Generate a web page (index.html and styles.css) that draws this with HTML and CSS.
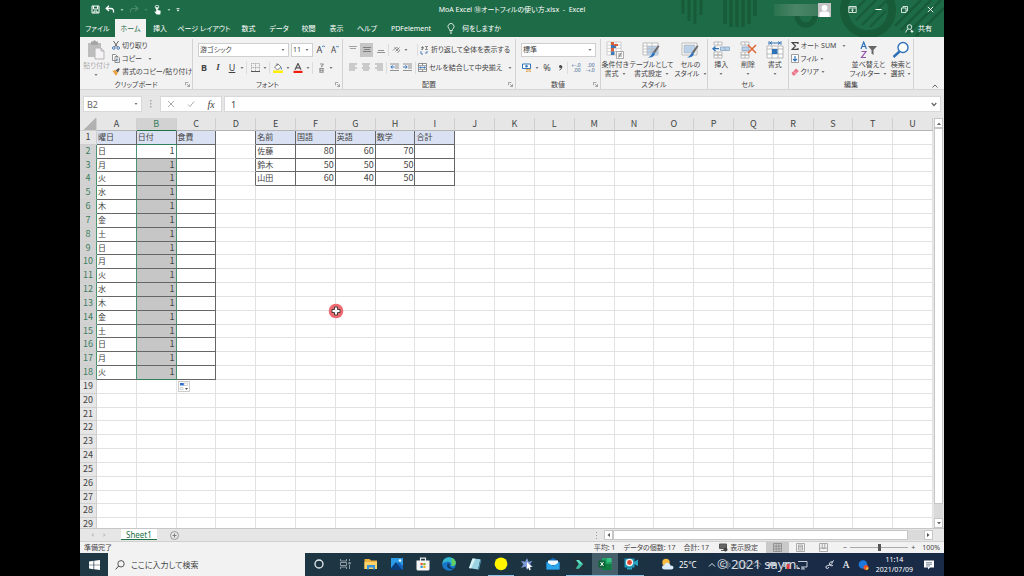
FILE: index.html
```html
<!DOCTYPE html>
<html lang="ja">
<head>
<meta charset="utf-8">
<title>MoA Excel - Excel</title>
<link rel="stylesheet" href="styles.css">
</head>
<body>
<svg class="defs" aria-hidden="true">
  <symbol id="caret" viewBox="0 0 4 4"><path d="M.5 1h3L2 3z" fill="#777"/></symbol>
  <symbol id="launch" viewBox="0 0 6 6"><path d="M.5 4V.5H4M2.500 2.500L5 5M5.500 2.500v3h-3" fill="none" stroke="#777" stroke-width=".8"/></symbol>
</svg>
<div class="app">
  <header class="titlebar">
    <svg class="pattern" viewBox="0 0 264 37" aria-hidden="true">
      <g stroke="#185b39" fill="none">
        <path d="M3 0v14M9 0v21M15 0v24M21 0v15" stroke-width="3"/>
        <path d="M45 0v24M51 0v27M57 0v27M63 0v27M69 0v24M75 0v16" stroke-width="3.500"/>
        <circle cx="126" cy="16" r="9" stroke-width="5"/>
        <circle cx="188" cy="10" r="24" stroke-width="8"/>
        <path d="M171 14l14-14M176 20l20-20M182 25l24-24M190 27l16-16" stroke-width="2"/>
        <path d="M215 26l26-26M221 30l30-30M227 34l34-34M236 36l28-28" stroke-width="2.500"/>
      </g>
    </svg>
    <div class="quick">
      <button aria-label="上書き保存"><svg width="9" height="9" viewBox="0 0 9 9"><path d="M1 1h7v7H1zM2.500 1v3h4V1M3 8V6h3v2" fill="none" stroke="#fff"/></svg></button>
      <button aria-label="元に戻す"><svg width="10" height="9" viewBox="0 0 10 9"><path d="M4 .8L1.200 3.500 4 6M1.500 3.500h4.500q3 0 2.500 4" fill="none" stroke="#fff" stroke-width="1.300"/></svg></button>
      <svg class="qcaret" viewBox="0 0 4 4"><path d="M.5 1h3L2 3z" fill="#a9cbb8"/></svg>
      <button aria-label="やり直し"><svg width="10" height="9" viewBox="0 0 10 9"><path d="M6 .8L8.800 3.500 6 6M8.500 3.500H4q-3 0-2.500 4" fill="none" stroke="#4b8a67" stroke-width="1.200"/></svg></button>
      <svg class="qcaret" viewBox="0 0 4 4"><path d="M.5 1h3L2 3z" fill="#4b8a67"/></svg>
      <button aria-label="タッチ/マウス"><svg width="9" height="10" viewBox="0 0 9 10"><circle cx="4" cy="2" r="1.800" fill="none" stroke="#fff" stroke-width=".8"/><path d="M3.200 2h1.500v3l3 .8-.4 3.700H3.500L1.300 6.500l1.900.3z" fill="#fff"/></svg></button>
      <svg class="qcaret" viewBox="0 0 4 4"><path d="M.5 1h3L2 3z" fill="#a9cbb8"/></svg>
      <svg class="qcaret last" viewBox="0 0 4 4"><path d="M.5 0h3v.8h-3zM.5 1.800h3L2 3.500z" fill="#fff"/></svg>
    </div>
    <h1 class="doc">MoA Excel ⑱オートフィルの使い方.xlsx &nbsp;-&nbsp; Excel</h1>
    <div class="account">
      <span class="username"></span>
      <svg width="13" height="14" viewBox="0 0 13 14"><path d="M0 0h13v14H0z" fill="#c5c3c5"/><circle cx="6.500" cy="5" r="2.900" fill="#fff"/><path d="M1.500 14V11q0-2.500 3-2.500h4q3 0 3 2.500v3z" fill="#fff"/></svg>
      <div class="winbtns">
        <button aria-label="リボンの表示オプション"><svg width="9" height="9" viewBox="0 0 9 9"><path d="M.8 1.500h7.400v6H.8zM.8 3h7.400M4.500 7V4.200M3.200 5.400l1.300-1.200 1.300 1.200" fill="none" stroke="#e6f0ea" stroke-width=".9"/></svg></button>
        <button aria-label="最小化"><svg width="9" height="9" viewBox="0 0 9 9"><path d="M1.500 4.500h6" stroke="#fff"/></svg></button>
        <button aria-label="元に戻す(縮小)"><svg width="9" height="9" viewBox="0 0 9 9"><path d="M1.500 3h4.500v4.500H1.500zM3 3V1.500h4.500V6H6" fill="none" stroke="#fff" stroke-width=".8"/></svg></button>
        <button aria-label="閉じる"><svg width="9" height="9" viewBox="0 0 9 9"><path d="M1.800 1.800l5.400 5.400M7.200 1.800L1.800 7.200" stroke="#fff" stroke-width=".9"/></svg></button>
      </div>
    </div>
  </header>

  <nav class="tabs">
    <button>ファイル</button>
    <button class="active">ホーム</button>
    <button>挿入</button>
    <button>ページ レイアウト</button>
    <button>数式</button>
    <button>データ</button>
    <button>校閲</button>
    <button>表示</button>
    <button>ヘルプ</button>
    <button>PDFelement</button>
    <button class="tell"><svg width="8" height="11" viewBox="0 0 8 11"><path d="M2.700 7.500Q2.700 6.300 1.700 5.400A3 3 0 1 1 6.300 5.400Q5.300 6.300 5.300 7.500zM2.800 9h2.400M3.200 10.300h1.600" fill="none" stroke="#fff" stroke-width=".8"/></svg>何をしますか</button>
    <button class="share"><svg width="9" height="9" viewBox="0 0 9 9"><circle cx="4.500" cy="3" r="2.300" fill="none" stroke="#fff" stroke-width=".8"/><path d="M.8 8.500q.3-3 2.500-3.400M5.500 5.200L7 7M5.500 7.500h3M7 6v3" fill="none" stroke="#fff" stroke-width=".8"/></svg>共有</button>
  </nav>

  <section class="ribbon">
    <div class="group g-clip">
      <div class="body">
        <button class="big paste"><svg width="18" height="20" viewBox="0 0 18 20"><path d="M1 3h13v14H1z" fill="#bdbdbd"/><path d="M4 1.500h2Q7.500-1 9 1.500h2V5H4z" fill="#a5a5a5"/><path d="M8 8h6l3 3v8H8z" fill="#f5f3f5" stroke="#b5b5b5"/><path d="M14 8v3h3" fill="none" stroke="#b5b5b5"/></svg><span>貼り付け</span><svg class="caret"><use href="#caret"/></svg></button>
        <div class="stack">
          <button><svg width="8" height="9" viewBox="0 0 8 9"><path d="M1.500 0l4 6M6.500 0l-4 6" stroke="#666" fill="none"/><circle cx="1.800" cy="7" r="1.300" fill="none" stroke="#3f78b5"/><circle cx="6.200" cy="7" r="1.300" fill="none" stroke="#3f78b5"/></svg>切り取り</button>
          <button><svg width="8" height="9" viewBox="0 0 8 9"><path d="M.5.500h3l1.500 1.500v4.500H.5zM3 2.500h3l1.500 1.500v4.500H3z" fill="#fff" stroke="#777" stroke-width=".8"/><path d="M4 5.500h2.500M4 7h2.500" stroke="#5a8fc7" stroke-width=".6"/></svg>コピー<svg class="caret wide"><use href="#caret"/></svg></button>
          <button><svg width="8" height="8" viewBox="0 0 8 8"><path d="M.5 3L3 2l3 3-2 2.700z" fill="#eda23d"/><path d="M3.500 2.500L6 4.500 7.800 1 6.500 0z" fill="#5b5b5b"/></svg>書式のコピー/貼り付け</button>
        </div>
      </div>
      <div class="label">クリップボード<svg class="launch"><use href="#launch"/></svg></div>
    </div>

    <div class="group g-font">
      <div class="body rows">
        <div class="row">
          <span class="combo fontname"><select aria-label="フォント"><option>游ゴシック</option></select><svg class="caret"><use href="#caret"/></svg></span>
          <span class="combo fontsize"><select aria-label="サイズ"><option>11</option></select><svg class="caret"><use href="#caret"/></svg></span>
          <button class="ic lg">A<svg width="3" height="3" viewBox="0 0 3 3"><path d="M0 2.200L1.500.7 3 2.200" stroke="#3f78b5" fill="none"/></svg></button>
          <button class="ic sm">A<svg width="3" height="3" viewBox="0 0 3 3"><path d="M0 .7l1.500 1.500L3 .7" stroke="#3f78b5" fill="none"/></svg></button>
        </div>
        <div class="row">
          <button class="ic b">B</button>
          <button class="ic i">I</button>
          <button class="ic u">U</button>
          <svg class="caret"><use href="#caret"/></svg>
          <span class="sep"></span>
          <button class="ic" aria-label="罫線"><svg width="9" height="9" viewBox="0 0 9 9"><path d="M.5.500h8v8M.5.500v8M4.500.500v8M.5 4.500h8" fill="none" stroke="#aaa" stroke-dasharray="1 .6"/><path d="M0 8.500h9" stroke="#555"/></svg></button>
          <svg class="caret"><use href="#caret"/></svg>
          <span class="sep"></span>
          <button class="ic" aria-label="塗りつぶしの色"><svg width="10" height="10" viewBox="0 0 10 10"><path d="M1.500 4L5 1l3 3-3.500 3z" fill="#fff" stroke="#666" stroke-width=".8"/><path d="M4 3V.3" stroke="#666" stroke-width=".8"/><path d="M8.200 4q1.600 2.500.3 2.500T8.200 4z" fill="#3f78b5"/><path d="M0 7.500h10V10H0z" fill="#fff000"/></svg></button>
          <svg class="caret"><use href="#caret"/></svg>
          <button class="ic" aria-label="フォントの色"><svg width="10" height="10" viewBox="0 0 10 10"><path d="M2 6.800L5 .5l3 6.300M3 4.800h4" fill="none" stroke="#555" stroke-width="1.200"/><path d="M.5 7.800h9V10h-9z" fill="#f21c0d"/></svg></button>
          <svg class="caret"><use href="#caret"/></svg>
          <span class="sep"></span>
          <button class="ic" aria-label="ふりがなの表示"><svg width="7" height="10" viewBox="0 0 7 10"><path d="M2 1h3.500L3 4M4 2.500v1.500M1.500 5.500h4M1.500 7.300h4M1.500 9.200h4M2 5v4.500M5 5v4.500" fill="none" stroke="#777" stroke-width=".8"/></svg></button>
          <svg class="caret"><use href="#caret"/></svg>
        </div>
      </div>
      <div class="label">フォント<svg class="launch"><use href="#launch"/></svg></div>
    </div>

    <div class="group g-align">
      <div class="body rows">
        <div class="row">
          <button class="al" aria-label="上揃え"><svg width="8" height="9" viewBox="0 0 8 9"><path d="M0 1.500h8M1 3.500h6" stroke="#999" stroke-width=".9"/></svg></button>
          <button class="al on" aria-label="上下中央揃え"><svg width="8" height="9" viewBox="0 0 8 9"><path d="M0 2.500h8M1 4.500h6M0 6.500h8" stroke="#777" stroke-width=".9"/></svg></button>
          <button class="al" aria-label="下揃え"><svg width="8" height="9" viewBox="0 0 8 9"><path d="M1 5.500h6M0 7.500h8" stroke="#888" stroke-width=".9"/></svg></button>
          <span class="sep"></span>
          <button class="al" aria-label="方向"><svg width="9" height="9" viewBox="0 0 9 9"><path d="M1 5.500l3.500-3.500L7 4.500M2.500 2.500l4 4M3.500 6.500L7.500 2.500M5.500 8l2.500-3" fill="none" stroke="#777" stroke-width=".8"/></svg></button>
          <svg class="caret"><use href="#caret"/></svg>
          <span class="sep gap"></span>
          <button class="txt"><svg width="9" height="10" viewBox="0 0 9 10"><path d="M1 2.500h3M2.500 1v4M1 4.500l2.500-1M5 1.500h3M6.500 1.500v3M5 4.500h3" fill="none" stroke="#777" stroke-width=".8"/><path d="M1 6v3h2M7 6v2H5" stroke="#3f78b5" stroke-width=".9" fill="none"/></svg>折り返して全体を表示する</button>
        </div>
        <div class="row">
          <button class="al" aria-label="左揃え"><svg width="8" height="9" viewBox="0 0 8 9"><path d="M0 1h8M0 3h6M0 5h8M0 7h6" stroke="#999" stroke-width=".9"/></svg></button>
          <button class="al" aria-label="中央揃え"><svg width="8" height="9" viewBox="0 0 8 9"><path d="M0 1h8M1 3h6M0 5h8M1 7h6" stroke="#999" stroke-width=".9"/></svg></button>
          <button class="al" aria-label="右揃え"><svg width="8" height="9" viewBox="0 0 8 9"><path d="M0 1h8M2 3h6M0 5h8M2 7h6" stroke="#999" stroke-width=".9"/></svg></button>
          <span class="sep"></span>
          <button class="al" aria-label="インデントを減らす"><svg width="9" height="9" viewBox="0 0 9 9"><path d="M0 1h9M5 3h4M5 5h4M0 7.500h9" stroke="#888" stroke-width=".9"/><path d="M4.500 4H1M2.500 2.300L.8 4l1.700 1.700" stroke="#2f72b8" fill="none"/></svg></button>
          <button class="al" aria-label="インデントを増やす"><svg width="9" height="9" viewBox="0 0 9 9"><path d="M0 1h9M5 3h4M5 5h4M0 7.500h9" stroke="#888" stroke-width=".9"/><path d="M0 4h4M2.500 2.300L4.200 4 2.500 5.700" stroke="#2f72b8" fill="none"/></svg></button>
          <span class="sep"></span>
          <button class="txt"><svg width="9" height="9" viewBox="0 0 9 9"><path d="M.5.500h8v8h-8zM.5 2.700h8M.5 6.300h8M4.500.500v2M4.500 6.500v2" fill="#fff" stroke="#777" stroke-width=".8"/><path d="M1.500 4.500h6M3 3.500l-1.300 1L3 5.500M6 3.500l1.300 1L6 5.500" stroke="#2f72b8" stroke-width=".8" fill="none"/></svg>セルを結合して中央揃え<svg class="caret wide"><use href="#caret"/></svg></button>
        </div>
      </div>
      <div class="label">配置<svg class="launch"><use href="#launch"/></svg></div>
    </div>

    <div class="group g-num">
      <div class="body rows">
        <div class="row"><span class="combo numfmt"><select aria-label="表示形式"><option>標準</option></select><svg class="caret"><use href="#caret"/></svg></span></div>
        <div class="row">
          <button class="ic" aria-label="通貨表示形式"><svg width="10" height="10" viewBox="0 0 10 10"><path d="M.5 1h8v4.500h-8z" fill="#fff" stroke="#2f72b8"/><circle cx="4.500" cy="3.200" r="1.200" fill="#2f72b8"/><path d="M4 7q2.500-1.500 5 0M4 8.700q2.500-1.500 5 0" stroke="#e6a64a" fill="none"/></svg></button>
          <svg class="caret"><use href="#caret"/></svg>
          <button class="ic pct">%</button>
          <button class="ic comma" aria-label="桁区切り"><svg width="5" height="8" viewBox="0 0 5 8"><circle cx="2.500" cy="2.500" r="1.500" fill="#444"/><path d="M4 2.500Q4 5 1.500 6" stroke="#444" fill="none"/></svg></button>
          <span class="sep"></span>
          <button class="ic dec">←.0<br>.00</button>
          <button class="ic dec">.00<br>→.0</button>
        </div>
      </div>
      <div class="label">数値<svg class="launch"><use href="#launch"/></svg></div>
    </div>

    <div class="group g-style">
      <div class="body">
        <button class="big"><svg width="18" height="18" viewBox="0 0 18 18"><path d="M1 1h14v13H1zM1 4h14M1 7.300h14M1 10.600h14M5 1v13M10 1v13" fill="#fff" stroke="#c4c4c4" stroke-width=".8"/><path d="M5 1h3v3H5zM5 7h3v3.500H5z" fill="#d9603b"/><path d="M5 4h5v3H5zM5 10.500h3.500V14H5z" fill="#3f78b5"/><path d="M8 3h4v2H8z" fill="#d9603b"/><path d="M10.500 10.500h7v7h-7z" fill="#fff" stroke="#999" stroke-width=".8"/><path d="M12 13h4M12 15h4M15.500 11.500l-3 5" stroke="#666" stroke-width=".7"/></svg><span>条件付き<br>書式<svg class="caret"><use href="#caret"/></svg></span></button>
        <button class="big"><svg width="18" height="18" viewBox="0 0 18 18"><path d="M1 2h15v12H1z" fill="#fff" stroke="#bbb"/><path d="M5 5h11v9H5z" fill="#b9d2ea"/><path d="M1 5h15M1 8h15M1 11h15M5 2v12M10 2v12" stroke="#b5b5b5" stroke-width=".7"/><path d="M17.500 5l-4.500 7-2-1 5-6.500z" fill="#666"/><path d="M11 11l2 1.500Q12 17 6 16.500 9 15.500 11 11z" fill="#2f72b8"/></svg><span>テーブルとして<br>書式設定<svg class="caret"><use href="#caret"/></svg></span></button>
        <button class="big"><svg width="18" height="18" viewBox="0 0 18 18"><path d="M1 2h15v12H1z" fill="#fff" stroke="#bbb"/><path d="M3 4h11v8H3z" fill="#b9d2ea" stroke="#aaa" stroke-width=".6"/><path d="M17.500 5l-4.500 7-2-1 5-6.500z" fill="#666"/><path d="M11 11l2 1.500Q12 17 6 16.500 9 15.500 11 11z" fill="#2f72b8"/></svg><span>セルの<br>スタイル<svg class="caret"><use href="#caret"/></svg></span></button>
      </div>
      <div class="label">スタイル</div>
    </div>

    <div class="group g-cell">
      <div class="body">
        <button class="big"><svg width="18" height="18" viewBox="0 0 18 18"><path d="M2 1h8v3H2zM6 1v3M2 11h8v3H2zM2 14h8v3H2zM6 11v6" fill="#fff" stroke="#aaa" stroke-width=".8"/><path d="M8.500 6h9v3.500h-9zM13 6v3.500" fill="#b9d2ea" stroke="#8aa5c0" stroke-width=".8"/><path d="M7 7.700H1M3.500 5.500L1 7.700 3.500 10" stroke="#2f72b8" stroke-width="1.300" fill="none"/></svg><span>挿入</span><svg class="caret"><use href="#caret"/></svg></button>
        <button class="big"><svg width="18" height="18" viewBox="0 0 18 18"><path d="M2 1h8v3H2zM6 1v3M2 11h8v3H2zM2 14h8v3H2zM6 11v6" fill="#fff" stroke="#aaa" stroke-width=".8"/><path d="M3 6h7v3.500H3z" fill="#b9d2ea" stroke="#8aa5c0" stroke-width=".8"/><path d="M9 4l8 8M17 4l-8 8" stroke="#de6434" stroke-width="1.500"/></svg><span>削除</span><svg class="caret"><use href="#caret"/></svg></button>
        <button class="big"><svg width="18" height="18" viewBox="0 0 18 18"><path d="M1 5h16v12H1zM6 5v12M12 5v12M1 8h16M1 13h16" fill="#fff" stroke="#aaa" stroke-width=".8"/><path d="M6 8h5.500v5H6z" fill="#2f72b8"/><path d="M3.500 2h11M3 .2v3.600M15 .2v3.600M6 .5L4 2l2 1.500M12 .5L14 2l-2 1.500" stroke="#2f72b8" fill="none"/></svg><span>書式</span><svg class="caret"><use href="#caret"/></svg></button>
      </div>
      <div class="label">セル</div>
    </div>

    <div class="group g-edit">
      <div class="body">
        <div class="stack">
          <button><svg width="8" height="8" viewBox="0 0 8 8"><path d="M7 2V.7H1.200L4.500 4 1.200 7.300H7V6" fill="none" stroke="#444" stroke-width="1.200"/></svg>オート SUM<svg class="caret wide"><use href="#caret"/></svg></button>
          <button><svg width="8" height="9" viewBox="0 0 8 9"><path d="M.5.500h7v8h-7z" fill="#fff" stroke="#888" stroke-width=".8"/><path d="M4 2v5M2 5l2 2 2-2" fill="none" stroke="#2f72b8" stroke-width="1.200"/></svg>フィル<svg class="caret"><use href="#caret"/></svg></button>
          <button><svg width="8" height="8" viewBox="0 0 8 8"><path d="M.5 5L5 .5 7.800 3 3.500 7.500H2z" fill="#e8788a"/><path d="M2.300 3.300l3 2.700" stroke="#f7c7cf" stroke-width=".8"/></svg>クリア<svg class="caret"><use href="#caret"/></svg></button>
        </div>
        <button class="big"><svg width="18" height="18" viewBox="0 0 18 18"><path d="M2 8l2.700-7L7.400 8M3 5.500h3.500" stroke="#2f72b8" fill="none" stroke-width="1.200"/><path d="M2.500 10.500H7L2.500 16.500H7" stroke="#9255a8" fill="none" stroke-width="1.200"/><path d="M9 5h9l-3.500 4v5l-2-1.500V9z" fill="#666"/></svg><span>並べ替えと<br>フィルター<svg class="caret"><use href="#caret"/></svg></span></button>
        <button class="big"><svg width="18" height="18" viewBox="0 0 18 18"><circle cx="11" cy="6.500" r="5" fill="#fff" stroke="#2f72b8" stroke-width="1.400"/><path d="M7.500 10.500L1.500 16" stroke="#2f72b8" stroke-width="2.400"/></svg><span>検索と<br>選択<svg class="caret"><use href="#caret"/></svg></span></button>
      </div>
      <div class="label">編集</div>
    </div>
    <button class="collapse" aria-label="リボンを折りたたむ"><svg width="6" height="4" viewBox="0 0 6 4"><path d="M.5 3.500L3 1l2.500 2.500" fill="none" stroke="#666"/></svg></button>
  </section>

  <section class="formula">
    <span class="namebox"><input aria-label="名前ボックス" value="B2"><svg class="caret"><use href="#caret"/></svg></span>
    <svg class="dots" width="2" height="8" viewBox="0 0 2 8"><path d="M0 0h1.500v1.500H0zM0 3h1.500v1.500H0zM0 6h1.500v1.500H0z" fill="#aaa"/></svg>
    <div class="fxbtns">
      <button aria-label="キャンセル"><svg width="8" height="8" viewBox="0 0 8 8"><path d="M1 1l6 6M7 1L1 7" stroke="#aaa"/></svg></button>
      <button aria-label="入力"><svg width="8" height="8" viewBox="0 0 8 8"><path d="M1 4.500L3 6.500 7 1.500" fill="none" stroke="#aaa"/></svg></button>
      <button class="fx">fx</button>
    </div>
    <span class="fbar"><input aria-label="数式バー" value="1"><svg width="6" height="5" viewBox="0 0 6 5"><path d="M.7 1L3 3.500 5.300 1" fill="none" stroke="#666" stroke-width="1.200"/></svg></span>
  </section>

  <main class="sheet">
    <div class="viewport">
      <table id="grid" class="grid"></table>
      <svg class="pointer" width="16" height="16" viewBox="0 0 16 16" aria-hidden="true"><circle cx="8" cy="8" r="7.300" fill="#ee6a70"/><path d="M6.500 4h3v2.500H12v3H9.500V12h-3V9.500H4v-3h2.500z" fill="#fff" stroke="#333" stroke-width=".9"/></svg>
    </div>
    <div class="vscroll">
      <button aria-label="上へ"><svg width="4" height="3" viewBox="0 0 4 3"><path d="M0 3h4L2 .5z" fill="#666"/></svg></button>
      <div class="thumb"></div>
      <div class="rest"></div>
      <button aria-label="下へ"><svg width="4" height="3" viewBox="0 0 4 3"><path d="M0 0h4L2 2.500z" fill="#666"/></svg></button>
    </div>
  </main>

  <div class="sheetbar">
    <div class="sheets">
      <button class="nav" aria-label="前のシート"><svg width="3" height="4" viewBox="0 0 3 4"><path d="M2.500 0v4L.5 2z" fill="#bbb"/></svg></button>
      <button class="nav" aria-label="次のシート"><svg width="3" height="4" viewBox="0 0 3 4"><path d="M.5 0v4l2-2z" fill="#bbb"/></svg></button>
      <button class="tab">Sheet1</button>
      <button class="add" aria-label="新しいシート"><svg width="9" height="9" viewBox="0 0 9 9"><circle cx="4.500" cy="4.500" r="4" fill="none" stroke="#888" stroke-width=".8"/><path d="M2.500 4.500h4M4.500 2.500v4" stroke="#777" stroke-width=".9"/></svg></button>
      <svg class="grip" width="2" height="7" viewBox="0 0 2 7"><path d="M0 0h1v1H0zM0 3h1v1H0zM0 6h1v1H0z" fill="#999"/></svg>
    </div>
    <div class="hscroll">
      <button aria-label="左へ"><svg width="3" height="4" viewBox="0 0 3 4"><path d="M3 0v4L.5 2z" fill="#555"/></svg></button>
      <div class="thumb"></div>
      <div class="rest"></div>
      <button aria-label="右へ"><svg width="3" height="4" viewBox="0 0 3 4"><path d="M0 0v4l2.500-2z" fill="#555"/></svg></button>
    </div>
  </div>

  <footer class="status">
    <span class="ready">準備完了</span>
    <span>平均: 1</span>
    <span>データの個数: 17</span>
    <span>合計: 17</span>
    <button class="disp"><svg width="9" height="9" viewBox="0 0 9 9"><path d="M.5 1h7v4.500h-7z" fill="#666" stroke="#555"/><path d="M2 7.500h3" stroke="#555"/><circle cx="6.500" cy="6.500" r="2" fill="#444"/></svg>表示設定</button>
    <div class="views">
      <button class="on" aria-label="標準"><svg width="9" height="9" viewBox="0 0 9 9"><path d="M.5.500h8v8h-8zM.5 3.200h8M.5 5.900h8M3.200.500v8M5.900.500v8" fill="none" stroke="#888" stroke-width=".8"/></svg></button>
      <button aria-label="ページ レイアウト"><svg width="9" height="9" viewBox="0 0 9 9"><path d="M.5.500h8v8h-8zM2.500 2h4v5h-4zM3.200 3.500h2.600M3.200 5h2.600" fill="none" stroke="#999" stroke-width=".8"/></svg></button>
      <button aria-label="改ページ プレビュー"><svg width="9" height="9" viewBox="0 0 9 9"><path d="M.5.500h8v8h-8zM3.200.500v4.700h2.600V.5M.5 5.200h8" fill="none" stroke="#999" stroke-width=".8"/></svg></button>
    </div>
    <div class="zoom">
      <button aria-label="縮小">−</button>
      <input type="range" min="0" max="100" value="50" aria-label="ズーム">
      <button aria-label="拡大">+</button>
      <span>100%</span>
    </div>
  </footer>

  <div class="taskbar">
    <button class="start" aria-label="スタート"><svg width="11" height="10" viewBox="0 0 11 10"><path d="M0 1.500L4.500.8V4.700H0zM5.200.7L11 0v4.700H5.200zM0 5.300h4.500v3.900L0 8.500zM5.200 5.300H11V10l-5.800-.7z" fill="#fff"/></svg></button>
    <label class="search"><svg width="10" height="10" viewBox="0 0 10 10"><circle cx="6" cy="3.800" r="3.200" fill="none" stroke="#444" stroke-width=".9"/><path d="M3.700 6L.6 9.400" stroke="#444"/></svg><input aria-label="検索" placeholder="ここに入力して検索"></label>
    <div class="pins">
      <button aria-label="Cortana"><svg viewBox="0 0 16 16"><circle cx="8" cy="8" r="4" fill="none" stroke="#e8eef0" stroke-width="1.300"/></svg></button>
      <button aria-label="タスク ビュー"><svg viewBox="0 0 16 16"><path d="M3.500 3v2h6V3M3.500 13v-2h6v2M3.500 6.500h6v3h-6zM12.500 3v2M12.500 9v4M11.800 6.500h1.500v1.500h-1.500z" fill="none" stroke="#98a5ab" stroke-width=".9"/></svg></button>
      <button aria-label="エクスプローラー"><svg viewBox="0 0 16 16"><path d="M1.500 3h5l1.500 1.500h6V13h-12.500z" fill="#f0b23d"/><path d="M1.500 6H14v7H1.500z" fill="#ffd36a"/><path d="M4 9h8v4.500H10v-2H6v2H4z" fill="#3c92d6"/></svg></button>
      <button aria-label="フォト"><svg viewBox="0 0 16 16"><path d="M2 2h12v12H2z" fill="#2c9be8"/><path d="M2 12l5-6 7 8H2z" fill="#0b3e7a"/><path d="M8 8l2-2 4 4v4z" fill="#1565ba"/><circle cx="11" cy="4.500" r="1.200" fill="#fff"/></svg></button>
      <button aria-label="Microsoft Store"><svg viewBox="0 0 16 16"><path d="M5.500 5V2.200h5V5" fill="none" stroke="#e8e8e8" stroke-width="1.200"/><path d="M1.500 4.500h13V13q0 1.500-1.500 1.500H3q-1.500 0-1.500-1.500z" fill="#f5f5f5"/><path d="M5.500 7h2.200v2.200H5.500z" fill="#e75330"/><path d="M8.300 7h2.200v2.200H8.300z" fill="#7bb52b"/><path d="M5.500 9.800h2.200V12H5.500z" fill="#2a9de0"/><path d="M8.300 9.800h2.200V12H8.300z" fill="#f4b41d"/></svg></button>
      <button aria-label="Edge"><svg viewBox="0 0 16 16"><circle cx="8" cy="8" r="6.800" fill="#1877c9"/><path d="M1.200 8Q2 1 8.500 1.200 15 2 14.800 7.500 14 10.500 10 10q1.500-4-3-4.500Q3 5.500 1.200 8z" fill="#35b7ce"/><path d="M11 2q4 2 3.800 5.500-.8 3-4.500 2.500 1.500-2 .2-3.700z" fill="#63cf5e"/><path d="M6.500 7.500q-1.500 4.500 3 5.500 2 .2 4-.8-5.500.3-5-4.700z" fill="#123c65"/></svg></button>
      <button aria-label="メモ帳"><svg viewBox="0 0 16 16"><path d="M5.500 2.500l8 .8-2.500 10.200-9-1.500z" fill="#9bd3e2"/><path d="M5.500 2.500l3 .3L4 12.500l-2-.5z" fill="#d8f1f6"/><path d="M13.500 3.300l.8 1L12 13.800l-1-.3z" fill="#4d8da5"/></svg></button>
      <button class="run" aria-label="ポインター"><svg viewBox="0 0 16 16"><circle cx="8" cy="7.800" r="6.400" fill="#fff500"/></svg></button>
      <button aria-label="ツール"><svg viewBox="0 0 16 16"><path d="M8 2l1.500 3.800 4-.8L11 8l3 3-4-.5L8 14l-1.500-3.500L2 12l2.500-3.500L2 5l4.200.8z" fill="#7e9bd8"/><path d="M8 6l5 5-2.200.2 1 2.500-1.500.5-1-2.500L8 13z" fill="#fff"/></svg></button>
      <button aria-label="メール"><svg viewBox="0 0 16 16"><path d="M1.500 6L8 1.800 14.500 6v7.500h-13z" fill="#0f6cbd"/><path d="M3 4.500h10V9H3z" fill="#f2f8fc"/><path d="M1.500 6L8 10l6.500-4v7.500h-13z" fill="#2ba4ea"/></svg></button>
      <button class="run" aria-label="Filmora"><svg viewBox="0 0 16 16"><path d="M2 2h12v12H2z" fill="#223039"/><path d="M5 4l3 0 4 4-4 4.500-3 0L8 8z" fill="#59e2c1"/><path d="M8 8l4 0-4 4.500-3 0z" fill="#3ab89f"/></svg></button>
      <button class="run cur" aria-label="Excel"><svg viewBox="0 0 16 16"><path d="M5 2h9.500v12H5z" fill="#21a366"/><path d="M10 2h4.500v4H10z" fill="#33c481"/><path d="M5 8h9.500v6H5z" fill="#107c41"/><path d="M1.500 4.500h7v7h-7z" fill="#0c6436"/><path d="M3.500 6l3 4M6.500 6l-3 4" stroke="#fff"/></svg></button>
      <button class="run" aria-label="録画"><svg viewBox="0 0 16 16"><path d="M1.500 2.500h10v9h-10z" fill="#1f99ba"/><path d="M11 6l4-2.500V10l-4-2zM4 11.500h5v2H4z" fill="#2aa5c4"/><circle cx="6.500" cy="6.500" r="3.700" fill="#f5f5f5"/><circle cx="6.500" cy="6.500" r="2.400" fill="#e2452f"/></svg></button>
    </div>
    <div class="weather"><svg width="13" height="13" viewBox="0 0 13 13"><circle cx="5" cy="4.500" r="3.700" fill="#f6b93b"/><path d="M3.500 11.500Q1 11.500 1 9.300q0-2 2.300-2.200Q4.500 4 7.300 5q2 .6 2.200 2.500 3 0 3 2.200 0 1.800-2.200 1.800z" fill="#dcebfa"/></svg>25°C</div>
    <div class="tray">
      <svg viewBox="0 0 12 12"><path d="M3 7.500l3-3 3 3" fill="none" stroke="#dde3ea"/></svg>
      <svg viewBox="0 0 12 12"><path d="M2 4.500h2l3-2v7l-3-2H2zM8.500 4q1.500 2 0 4" fill="none" stroke="#93a1b0" stroke-width=".8"/></svg>
      <svg viewBox="0 0 12 12"><path d="M2 3h6v6H2zM8 5l3-1.500v5L8 7" fill="none" stroke="#7e8e9e" stroke-width=".8"/></svg>
      <svg viewBox="0 0 12 12"><path d="M1.500 5.500q4-4 9 0M3 7.500q3-2.500 6 0" fill="none" stroke="#8a99a9" stroke-width=".8"/></svg>
      <svg viewBox="0 0 12 12"><path d="M1.500 7Q1 4.500 4 4 5 2 7.500 3.500 11 4 10.500 7z" fill="#b9c3cd"/></svg>
      <svg viewBox="0 0 12 12"><path d="M2 3h6v5H2z" fill="#8d9aaa"/><circle cx="7.500" cy="7.500" r="2.600" fill="#df3b38"/></svg>
      <svg viewBox="0 0 12 12"><path d="M2 2.500h9v5.500H5M7 8v2M5 10h4M1 6v3.500h3" fill="none" stroke="#d6dde5" stroke-width=".9"/></svg>
    </div>
    <div class="tray second">
      <svg viewBox="0 0 12 12"><path d="M2 9q-1-2 2-2.500l3-1q2-1 1-2.500T5 5q2 3 4 1.500M2 9q2 1.500 3-1M8 3l2-1.500" fill="none" stroke="#e5eaf0" stroke-width=".9"/></svg>
      <span class="ime">A</span>
      <svg viewBox="0 0 12 12"><circle cx="6" cy="5.500" r="4.300" fill="#1d78dd"/><circle cx="9" cy="8.500" r="2.500" fill="#e8532f"/><path d="M9 8.500h2.500A2.500 2.500 0 0 1 9 11z" fill="#f6c12d"/></svg>
    </div>
    <div class="clock"><span>11:14</span><span>2021/07/09</span></div>
    <button class="notice" aria-label="通知"><svg width="12" height="12" viewBox="0 0 12 12"><path d="M1 1.500h10v7H7L5 10.500v-2H1z" fill="#fff"/><path d="M3 3.700h6M3 5.300h6M3 7h4" stroke="#4c5b72" stroke-width=".7"/></svg></button>
    <div class="watermark">© 2021 saym.</div>
  </div>
</div>
<script src="grid.js"></script>
</body>
</html>
```

FILE: grid.js
```js
const ROWS = 29;
const COLS = "ABCDEFGHIJKLMNOPQRSTU".split("");
const cells = {};

const put = (col, row, values) =>
  values.forEach((v, i) => { cells[COLS[COLS.indexOf(col) + i] + row] = v; });

put("A", 1, ["曜日", "日付", "食費"]);
const week = ["日", "月", "火", "水", "木", "金", "土"];
for (let r = 2; r <= 18; r++) put("A", r, [week[(r - 2) % 7], 1, ""]);

put("E", 1, ["名前", "国語", "英語", "数学", "合計"]);
put("E", 2, ["佐藤", 80, 60, 70, ""]);
put("E", 3, ["鈴木", 50, 50, 50, ""]);
put("E", 4, ["山田", 60, 40, 50, ""]);

const el = (tag, cls, text) => {
  const n = document.createElement(tag);
  n.className = cls.join(" ");
  n.textContent = text;
  return n;
};

const grid = document.getElementById("grid");
const head = document.createElement("tr");
head.append(el("th", ["corner"], ""));
COLS.forEach(c => head.append(el("th", c === "B" ? ["col", "sel"] : ["col"], c)));
grid.append(head);

for (let r = 1; r <= ROWS; r++) {
  const tr = document.createElement("tr");
  const selected = r >= 2 && r <= 18;
  tr.append(el("th", selected ? ["rowh", "sel"] : ["rowh"], r));
  COLS.forEach((c, i) => {
    const v = cells[c + r];
    const cls = [];
    if (v !== undefined) cls.push("boxed");
    if (v !== undefined && r === 1) cls.push("title");
    if (typeof v === "number") cls.push("num");
    if (c === "D" && r <= 4) cls.push("edge");
    if (c === "B" && selected) cls.push("range");
    if (c === "B" && r === 2) cls.push("current");
    if (c === "A" && selected) cls.push("before");
    if (c === "B" && r === 1) cls.push("above");
    if (c === "B" && r === 18) cls.push("last");
    const td = el("td", cls, v === undefined ? "" : v);
    if (c === "C" && r === 19) {
      td.classList.add("host");
      td.innerHTML = '<button class="fillopt" aria-label="オートフィル オプション"><svg width="10" height="9" viewBox="0 0 10 9"><path d="M1 1h4v2.500H1z" fill="#2f6fd0"/><path d="M5 1h3.500v2.500H5zM1 5.500h3v2H1z" fill="#fff" stroke="#bbb" stroke-width=".6"/><path d="M6 6h3L7.500 8z" fill="#555"/></svg></button>';
    }
    tr.append(td);
  });
  grid.append(tr);
}
```

FILE: styles.css
```css
* { box-sizing: border-box; }
html, body { height: 100%; }
body {
  margin: 0;
  padding: 0 80px;
  background: #000;
  font-family: "Noto Sans", "Noto Sans CJK JP", sans-serif;
  font-feature-settings: "palt";
  font-size: 7px;
  line-height: 9px;
  color: #444;
  overflow: hidden;
}
button, input, select {
  font: inherit;
  font-feature-settings: inherit;
  color: inherit;
  border: 0;
  padding: 0;
  margin: 0;
  background: none;
  min-width: 0;
}
button {
  display: flex;
  align-items: center;
  justify-content: center;
  white-space: nowrap;
}
svg { display: block; flex: none; }
.defs { position: absolute; width: 0; height: 0; }
.caret { width: 4px; height: 4px; }
.app { height: 100vh; display: flex; flex-direction: column; background: #e6e6e6; }

/* title bar */
.titlebar {
  position: relative;
  display: grid;
  grid-template-columns: 1fr auto 1fr;
  align-items: center;
  height: 19px;
  background: #1e6b47;
  color: #fff;
}
.pattern { position: absolute; right: 0; top: 0; width: 264px; height: 37px; z-index: 1; }
.quick { display: flex; align-items: center; gap: 5px; padding-left: 11px; }
.quick svg.qcaret { width: 4px; height: 4px; }
.doc { margin: 0; font-size: 7px; font-weight: 400; }
.account { position: relative; z-index: 2; display: flex; align-items: center; justify-content: flex-end; }
.username { width: 44px; height: 12px; background: linear-gradient(90deg, #2b734f, #4b8568 50%, #3b7b5b); }
.winbtns { display: flex; padding-left: 8px; padding-right: 1px; }
.winbtns button { width: 26px; height: 19px; }

/* ribbon tabs */
.tabs {
  display: grid;
  grid-template-columns: 35px 31px 28px 60px 29px 32px 27px 29px 32px 56px auto 1fr;
  height: 18px;
  background: #1e6b47;
  color: #fff;
}
.tabs button { position: relative; z-index: 2; }
.tabs .active { background: #f3f2f3; color: #1e6b47; }
.tabs .tell { gap: 7px; padding-left: 8px; }
.tabs .share { justify-self: end; gap: 4px; padding-right: 12px; }

/* ribbon */
.ribbon { display: flex; height: 53px; background: #f3f2f3; border-bottom: 1px solid #d6d6d6; }
.group { display: flex; flex-direction: column; border-right: 1px solid #d2d2d2; margin-top: 2px; }
.g-clip { width: 113px; }
.g-font { width: 150px; }
.g-align { width: 173px; }
.g-num { width: 85px; }
.g-style { width: 107px; }
.g-cell { width: 81px; }
.g-edit { width: 125px; }
.body { flex: 1; display: flex; align-items: flex-start; justify-content: space-around; }
.g-clip .body { justify-content: flex-start; gap: 3px; padding-left: 4px; }
.label { position: relative; height: 9px; text-align: center; }
.launch { position: absolute; right: 2px; top: 2px; width: 5px; height: 5px; }
.stack { display: flex; flex-direction: column; align-items: flex-start; }
.stack button { height: 13px; gap: 2px; }
.caret.wide { margin-left: 4px; }
.big { flex-direction: column; line-height: 9px; padding-top: 2px; gap: 1px; }
.big span .caret { display: inline-block; margin-left: 3px; }
.big > .caret { margin-top: 2px; }
.paste { color: #aaa; padding-top: 1px; }
.rows { flex-direction: column; justify-content: flex-start; gap: 3px; padding: 3px 0 0 5px; }
.g-align .rows { padding-left: 4px; }
.row { display: flex; align-items: center; height: 15px; gap: 2px; }
.combo { display: flex; align-items: center; height: 14px; padding: 0 3px 0 1px; background: #fff; border: 1px solid #cfcfcf; }
.combo select { flex: 1; appearance: none; outline: 0; }
.fontname { width: 91px; }
.fontsize { width: 22px; }
.numfmt { width: 75px; }
.ic { width: 12px; height: 14px; font-size: 9px; color: #444; }
.ic.lg svg, .ic.sm svg { align-self: flex-start; margin-top: 2px; }
.ic.sm { font-size: 8px; }
.ic.b { font-weight: 700; }
.ic.i { font-style: italic; font-family: "Liberation Serif", serif; font-weight: 700; }
.ic.u { text-decoration: underline; }
.ic.comma { width: 10px; }
.ic.dec { font-size: 5px; line-height: 5px; text-align: right; color: #35608f; }
.sep { width: 1px; height: 12px; background: #dcdcdc; }
.sep.gap { margin-left: 7px; }
.al { width: 11px; height: 14px; }
.al.on { width: 13px; background: #c6c6c6; }
.txt { gap: 2px; }
.collapse { margin: auto 6px 1px auto; }

/* formula bar */
.formula { display: flex; align-items: center; height: 28px; padding: 0 3px; font-size: 9px; }
.namebox { display: flex; align-items: center; width: 59px; height: 16px; padding: 0 3px; background: #fff; border: 1px solid #d8d8d8; }
.namebox input { flex: 1; width: 100%; color: #666; }
.dots { margin: 0 8px; }
.fxbtns { display: flex; width: 62px; height: 16px; background: #fff; border: 1px solid #d8d8d8; }
.fxbtns button { flex: 1; }
.fx { font-family: "Liberation Serif", serif; font-style: italic; font-size: 10px; }
.fbar { flex: 1; display: flex; align-items: center; height: 16px; margin-left: 2px; padding: 0 3px 0 6px; background: #fff; border: 1px solid #d8d8d8; }
.fbar input { flex: 1; }

/* sheet */
.sheet { flex: 1; min-height: 0; display: flex; }
.viewport { position: relative; flex: 1; overflow: hidden; }
.grid {
  display: grid;
  grid-template-columns: 17px repeat(21, 1fr);
  grid-template-rows: 13px repeat(29, 1fr);
  height: calc(100% + 4px);
  background: #fff;
  font-family: "Noto Sans CJK JP", sans-serif;
  font-size: 8px;
  line-height: 12px;
  font-feature-settings: normal;
}
.grid tr { display: contents; }
.grid th, .grid td {
  min-width: 0;
  min-height: 0;
  padding: 0 1px;
  border: 0 solid #e2e2e2;
  border-width: 0 1px 1px 0;
  font-weight: 400;
  text-align: left;
  white-space: nowrap;
}
.grid th { background: #e6e6e6; text-align: center; border-color: #cfcfcf; font-size: 9px; }
.grid .corner { background: linear-gradient(135deg, #e6e6e6 55%, #b2b2b2 55%); }
.grid .col { border-bottom-color: #b5b5b5; }
.grid th.sel { background: #d2d2d2; color: #3b7d5e; }
.grid .col.sel { border-bottom-color: #217346; }
.grid .rowh.sel { border-right-color: #4b9375; }
.grid .boxed { border-color: #666; }
.grid .edge { border-right-color: #666; }
.grid .title { background: #d9e1f2; }
.grid .num { text-align: right; font-size: 9px; }
.grid .range { background: #c6c6c6; border-right-color: #4b9375; }
.grid .current { background: #fff; }
.grid .before { border-right-color: #4b9375; }
.grid .above, .grid .last { border-bottom-color: #2f805a; }
.grid .host { position: relative; }
.fillopt { position: absolute; left: 1px; top: 1px; width: 12px; height: 11px; background: #fff; border: 1px solid #ccc; }
.pointer { position: absolute; left: 29%; top: 45%; margin-left: 1px; }

.vscroll { width: 11px; display: flex; flex-direction: column; padding: 0 1px; }
.vscroll button, .hscroll button { width: 9px; height: 10px; background: #fff; border: 1px solid #c6c6c6; }
.vscroll .thumb { flex: 1; background: #fff; border: 1px solid #c6c6c6; }
.vscroll .rest { height: 14px; background: #dadada; }

/* sheet tabs */
.sheetbar { display: flex; height: 13px; border-top: 1px solid #c6c6c6; }
.sheets { flex: 524; display: flex; align-items: center; }
.nav { width: 12px; height: 12px; }
.nav:first-child { margin-left: 6px; }
.tab { align-self: flex-start; height: 11px; margin-left: 11px; padding: 0 5px; background: #fff; color: #217346; font-size: 8px; border-bottom: 1px solid #217346; }
.add { margin-left: 13px; }
.grip { margin-left: auto; margin-right: 6px; }
.hscroll { flex: 329; display: flex; padding: 1px 0; margin-right: 11px; }
.hscroll .thumb { flex: 1; background: #fff; border: 1px solid #c6c6c6; }
.hscroll .rest { width: 16px; background: #dadada; }

/* status bar */
.status { display: flex; align-items: center; height: 12px; padding: 0 4px; background: #f3f2f3; border-top: 1px solid #d0d0d0; gap: 8px; }
.ready { margin-right: auto; }
.disp { gap: 2px; margin-left: 2px; }
.views { display: flex; }
.views button { width: 23px; height: 11px; }
.views .on { background: #c9c9c9; }
.zoom { display: flex; align-items: center; gap: 3px; }
.zoom span { margin-left: 4px; }
.zoom input { appearance: none; width: 58px; height: 9px; background: linear-gradient(#aaa, #aaa) center / 100% 1px no-repeat; }
.zoom input::-webkit-slider-thumb { appearance: none; width: 3px; height: 7px; background: #555; }

/* taskbar */
.taskbar { position: relative; display: flex; align-items: stretch; height: 23px; background: linear-gradient(90deg, #1f3844, #1c3442 60%, #1a2b47 85%); color: #fff; }
.start { width: 28px; }
.search { display: flex; align-items: center; gap: 6px; width: 197px; padding-left: 7px; background: #f2f2f2; }
.search input { flex: 1; font-size: 8px; outline: 0; }
.search input::placeholder { color: #444; opacity: 1; }
.pins { display: flex; padding-left: 1px; }
.pins button { width: 26px; border-bottom: 1px solid transparent; }
.pins svg { width: 16px; height: 16px; }
.pins .run { border-bottom-color: #8fc3e6; }
.pins .cur { background: #46606b; }
.weather { display: flex; align-items: center; gap: 5px; padding-left: 17px; font-size: 8px; }
.tray { display: flex; align-items: center; gap: 3px; margin-left: 9px; }
.tray svg { width: 12px; height: 12px; }
.tray.second { gap: 7px; margin-left: auto; }
.ime { font-family: "Liberation Serif", serif; font-size: 10px; }
.clock { display: flex; flex-direction: column; justify-content: center; align-items: center; margin-left: 7px; line-height: 10px; }
.notice { width: 31px; }
.watermark { position: absolute; right: 144px; top: 2px; font-family: "Noto Sans", sans-serif; font-size: 13px; line-height: 19px; color: #d7dce1; white-space: nowrap; }
```
